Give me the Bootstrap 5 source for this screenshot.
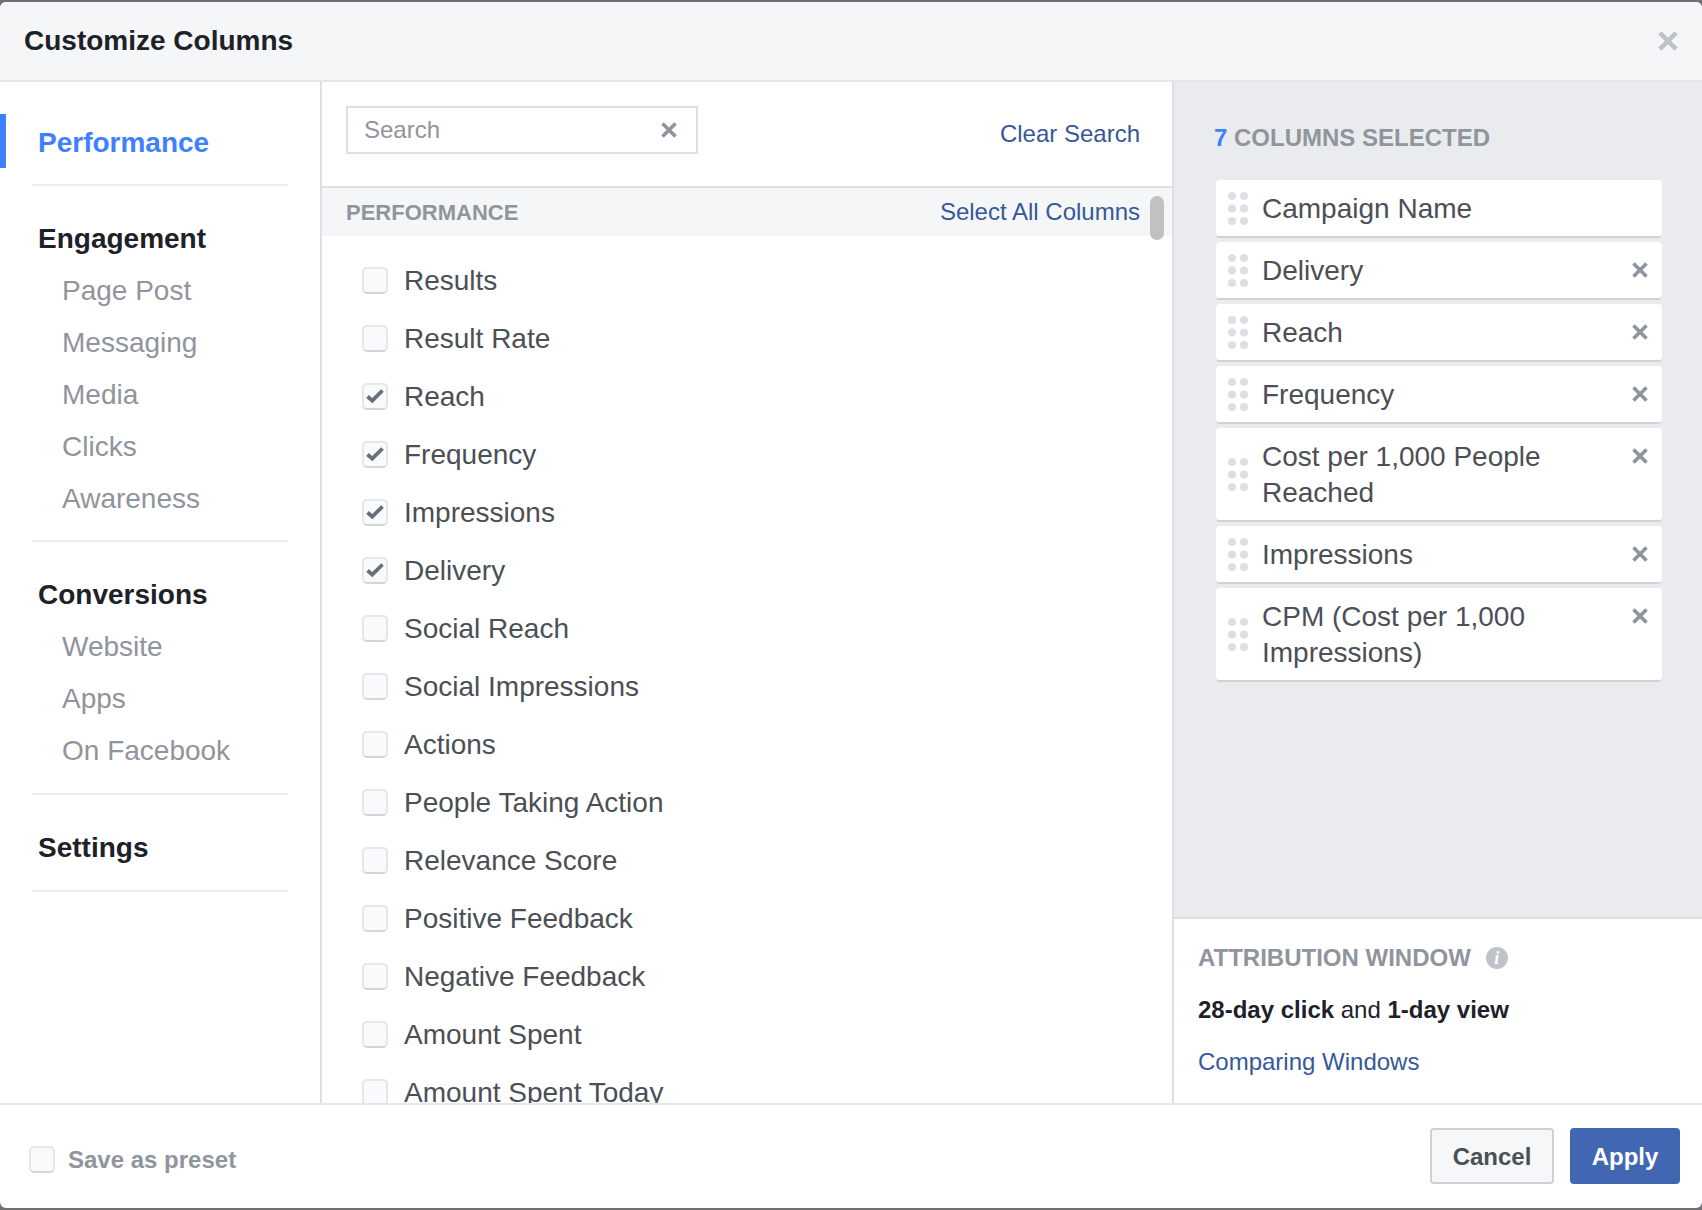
<!DOCTYPE html>
<html lang="en">
<head>
<meta charset="UTF-8">
<title>Customize Columns</title>
<link href="https://cdn.jsdelivr.net/npm/bootstrap@5.3.0/dist/css/bootstrap.min.css" rel="stylesheet">
<style>
  html, body { height: 100%; }
  body { background: #6f7073; font-family: "Liberation Sans", Arial, sans-serif; color: #4b4f56; overflow: hidden; }
  a { color: #365899; text-decoration: none; }

  .cc-shell { height: 1206px; margin-top: 2px; background: #fff; border-radius: 6px; overflow: hidden; }
  .cc-head { height: 80px; padding: 0 24px; background: #f5f6f7; border-bottom: 2px solid #e5e6e9; }
  .cc-head h1 { margin: 0; font-size: 28px; font-weight: 700; color: #1d2129; }
  .cc-close { color: #bec2c9; }

  .cc-main { height: 1021px; }

  /* left nav */
  .cc-side { width: 322px; flex: none; border-right: 2px solid #dddfe2; padding-top: 32px; }
  .cc-group { margin: 0 32px; padding: 27px 0 16px 6px; border-bottom: 2px solid #e9ebee; list-style: none; }
  .cc-group:first-child { padding-top: 0; }
  .cc-group:nth-child(2) { padding-bottom: 15px; }
  .cc-group li { height: 52px; line-height: 52px; font-size: 28px; color: #90949c; padding-left: 24px; }
  .cc-group li.cc-top { font-weight: 700; color: #1d2129; padding-left: 0; }
  .cc-group li.cc-on { height: 54px; line-height: 58px; color: #4080ff; margin-left: -38px; padding-left: 32px; border-left: 6px solid #4080ff; }

  /* middle list */
  .cc-mid { width: 852px; flex: none; border-right: 2px solid #dddfe2; overflow: hidden; }
  .cc-searchbar { height: 104px; padding: 24px 32px 0 24px; }
  .cc-search { width: 352px; height: 48px; padding: 0 19px 0 16px; border: 2px solid #dddfe2; }
  .cc-search input { border: 0; padding: 0; font-size: 24px; color: #4b4f56; height: 100%; box-shadow: none; background: transparent; }
  .cc-search input::placeholder { color: #90949c; }
  .cc-search svg { color: #90949c; }
  .cc-linktext { font-size: 24px; }
  .cc-clear { margin-top: 10px; }
  .cc-sect { height: 50px; padding: 0 32px 0 24px; background: #f5f6f7; border-top: 2px solid #dddfe2; }
  .cc-caps { font-size: 22px; font-weight: 700; color: #90949c; }
  .cc-thumb { top: 114px; left: 828px; width: 14px; height: 44px; background: #c1c1c1; border-radius: 7px; }
  .cc-rows { padding: 16px 0 0 40px; list-style: none; margin: 0; }
  .cc-rows li { height: 58px; gap: 16px; font-size: 28px; }
  .cc-rows .cc-box.form-check-input { margin-bottom: 2px; }

  .cc-box.form-check-input { width: 26px; height: 27px; margin: 0; flex: none; background-color: #f9fafb; border: 2px solid #e6e7ea; border-bottom-color: #d3d5d9; border-radius: 5px; box-shadow: none; }
  .cc-box.form-check-input:checked { background-color: #f9fafb; border-color: #e6e7ea; border-bottom-color: #d3d5d9; background-size: 22px 23px;
    background-image: url("data:image/svg+xml,%3csvg xmlns='http://www.w3.org/2000/svg' viewBox='0 0 22 23'%3e%3cpath d='M3.5 11.5l4.8 4.2L18.5 5.5' fill='none' stroke='%23686e7a' stroke-width='3.8'/%3e%3c/svg%3e"); }

  /* right panel */
  .cc-right { flex: 1 1 0; min-width: 0; }
  .cc-picked { height: 837px; padding: 38px 40px 0 42px; background: #e9ebee; border-bottom: 2px solid #dddfe2; }
  .cc-picked h2 { margin: 0 0 24px -2px; font-size: 24px; line-height: 36px; font-weight: 700; color: #90949c; }
  .cc-picked h2 b { color: #4080ff; }
  .cc-tile { min-height: 58px; padding: 11px 14px 9px 12px; margin-bottom: 4px; background: #fff; border-bottom: 2px solid #d0d2d6; border-radius: 4px; font-size: 28px; line-height: 36px; gap: 14px; }
  .cc-tile .cc-dots { flex: none; align-self: center; margin-top: -2px; }
  .cc-tile span { flex: 1 1 auto; }
  .cc-tile .cc-x { flex: none; margin-top: 9px; color: #8d949e; }
  .cc-attr { padding: 21px 24px; font-size: 24px; line-height: 36px; color: #1d2129; }
  .cc-attr h3 { margin: 0 0 16px; font-size: 24px; line-height: 36px; font-weight: 700; color: #90949c; gap: 15px; }
  .cc-attr p { margin: 0 0 16px; }
  .cc-info { width: 22px; height: 22px; background: #bec2c9; color: #fff; font: italic 700 18px/22px "Liberation Serif", serif; text-align: center; }

  /* footer */
  .cc-foot { height: 103px; padding: 0 22px 0 29px; border-top: 2px solid #e5e6e9; }
  .cc-save { gap: 13px; font-size: 24px; font-weight: 700; color: #90949c; margin: 9px 0 0; }
  .cc-save .cc-box.form-check-input { margin-bottom: 2px; }
  .cc-btn { height: 56px; font-size: 24px; font-weight: 700; border-radius: 4px; padding: 2px 0 0; }
  .cc-btn-off, .cc-btn-off:hover { width: 124px; color: #4b4f56; background: #f6f7f9; border: 2px solid #ced0d4; }
  .cc-btn-go, .cc-btn-go:hover { width: 110px; color: #fff; background: #4267b2; border: 2px solid #4267b2; }
</style>
</head>
<body>
<svg width="0" height="0" class="d-block">
  <symbol id="cc-cross" viewBox="0 0 16 16"><path d="M1.5 1.5l13 13M14.5 1.5l-13 13" stroke="currentColor" stroke-width="3.6" fill="none"/></symbol>
  <symbol id="cc-grip" viewBox="0 0 20 33"><g fill="#dddfe2"><circle cx="4" cy="4" r="4"/><circle cx="16" cy="4" r="4"/><circle cx="4" cy="16.5" r="4"/><circle cx="16" cy="16.5" r="4"/><circle cx="4" cy="29" r="4"/><circle cx="16" cy="29" r="4"/></g></symbol>
</svg>

<div class="cc-shell d-flex flex-column">
  <div class="cc-head d-flex align-items-center justify-content-between">
    <h1>Customize Columns</h1>
    <svg class="cc-close" width="20" height="20"><use href="#cc-cross"/></svg>
  </div>

  <div class="cc-main d-flex">
    <div class="cc-side">
      <ul class="cc-group">
        <li class="cc-top cc-on">Performance</li>
      </ul>
      <ul class="cc-group">
        <li class="cc-top">Engagement</li>
        <li>Page Post</li>
        <li>Messaging</li>
        <li>Media</li>
        <li>Clicks</li>
        <li>Awareness</li>
      </ul>
      <ul class="cc-group">
        <li class="cc-top">Conversions</li>
        <li>Website</li>
        <li>Apps</li>
        <li>On Facebook</li>
      </ul>
      <ul class="cc-group">
        <li class="cc-top">Settings</li>
      </ul>
    </div>

    <div class="cc-mid position-relative">
      <div class="cc-searchbar d-flex align-items-start justify-content-between">
        <div class="cc-search d-flex align-items-center">
          <input type="text" class="form-control" placeholder="Search">
          <svg class="flex-shrink-0" width="16" height="16"><use href="#cc-cross"/></svg>
        </div>
        <a class="cc-linktext cc-clear" href="#">Clear Search</a>
      </div>
      <div class="cc-sect d-flex align-items-center justify-content-between">
        <span class="cc-caps">PERFORMANCE</span>
        <a class="cc-linktext" href="#">Select All Columns</a>
      </div>
      <div class="cc-thumb position-absolute"></div>
      <ul class="cc-rows">
        <li class="d-flex align-items-center"><input class="form-check-input cc-box" type="checkbox">Results</li>
        <li class="d-flex align-items-center"><input class="form-check-input cc-box" type="checkbox">Result Rate</li>
        <li class="d-flex align-items-center"><input class="form-check-input cc-box" type="checkbox" checked>Reach</li>
        <li class="d-flex align-items-center"><input class="form-check-input cc-box" type="checkbox" checked>Frequency</li>
        <li class="d-flex align-items-center"><input class="form-check-input cc-box" type="checkbox" checked>Impressions</li>
        <li class="d-flex align-items-center"><input class="form-check-input cc-box" type="checkbox" checked>Delivery</li>
        <li class="d-flex align-items-center"><input class="form-check-input cc-box" type="checkbox">Social Reach</li>
        <li class="d-flex align-items-center"><input class="form-check-input cc-box" type="checkbox">Social Impressions</li>
        <li class="d-flex align-items-center"><input class="form-check-input cc-box" type="checkbox">Actions</li>
        <li class="d-flex align-items-center"><input class="form-check-input cc-box" type="checkbox">People Taking Action</li>
        <li class="d-flex align-items-center"><input class="form-check-input cc-box" type="checkbox">Relevance Score</li>
        <li class="d-flex align-items-center"><input class="form-check-input cc-box" type="checkbox">Positive Feedback</li>
        <li class="d-flex align-items-center"><input class="form-check-input cc-box" type="checkbox">Negative Feedback</li>
        <li class="d-flex align-items-center"><input class="form-check-input cc-box" type="checkbox">Amount Spent</li>
        <li class="d-flex align-items-center"><input class="form-check-input cc-box" type="checkbox">Amount Spent Today</li>
      </ul>
    </div>

    <div class="cc-right d-flex flex-column">
      <div class="cc-picked">
        <h2><b>7</b> COLUMNS SELECTED</h2>
        <div class="cc-tile d-flex"><svg class="cc-dots" width="20" height="33"><use href="#cc-grip"/></svg><span>Campaign Name</span></div>
        <div class="cc-tile d-flex"><svg class="cc-dots" width="20" height="33"><use href="#cc-grip"/></svg><span>Delivery</span><svg class="cc-x" width="16" height="16"><use href="#cc-cross"/></svg></div>
        <div class="cc-tile d-flex"><svg class="cc-dots" width="20" height="33"><use href="#cc-grip"/></svg><span>Reach</span><svg class="cc-x" width="16" height="16"><use href="#cc-cross"/></svg></div>
        <div class="cc-tile d-flex"><svg class="cc-dots" width="20" height="33"><use href="#cc-grip"/></svg><span>Frequency</span><svg class="cc-x" width="16" height="16"><use href="#cc-cross"/></svg></div>
        <div class="cc-tile d-flex"><svg class="cc-dots" width="20" height="33"><use href="#cc-grip"/></svg><span>Cost per 1,000 People<br>Reached</span><svg class="cc-x" width="16" height="16"><use href="#cc-cross"/></svg></div>
        <div class="cc-tile d-flex"><svg class="cc-dots" width="20" height="33"><use href="#cc-grip"/></svg><span>Impressions</span><svg class="cc-x" width="16" height="16"><use href="#cc-cross"/></svg></div>
        <div class="cc-tile d-flex"><svg class="cc-dots" width="20" height="33"><use href="#cc-grip"/></svg><span>CPM (Cost per 1,000<br>Impressions)</span><svg class="cc-x" width="16" height="16"><use href="#cc-cross"/></svg></div>
      </div>
      <div class="cc-attr">
        <h3 class="d-flex align-items-center">ATTRIBUTION WINDOW <span class="cc-info rounded-circle">i</span></h3>
        <p><strong>28-day click</strong> and <strong>1-day view</strong></p>
        <a href="#">Comparing Windows</a>
      </div>
    </div>
  </div>

  <div class="cc-foot d-flex align-items-center justify-content-between">
    <label class="cc-save d-flex align-items-center"><input class="form-check-input cc-box" type="checkbox">Save as preset</label>
    <div class="d-flex gap-3">
      <button type="button" class="btn cc-btn cc-btn-off">Cancel</button>
      <button type="button" class="btn cc-btn cc-btn-go">Apply</button>
    </div>
  </div>
</div>
</body>
</html>
